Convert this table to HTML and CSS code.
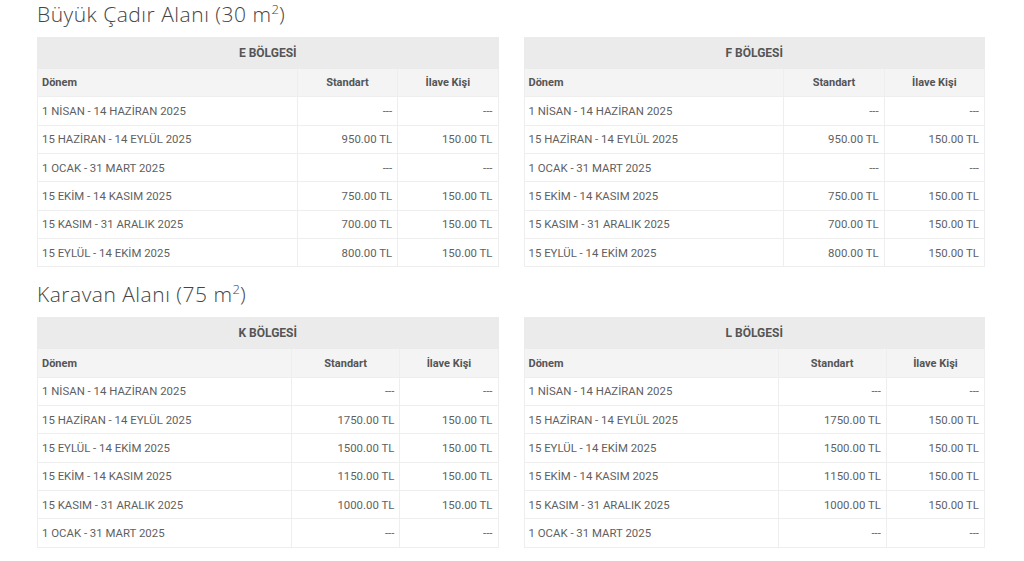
FILE: index.html
```html
<!DOCTYPE html>
<html lang="tr">
<head>
<meta charset="utf-8">
<link rel="stylesheet" href="styles.css">
</head>
<body>
<div class="page">
  <h2 class="title">Büyük Çadır Alanı (30 m<sup>2</sup>)</h2>
  <div class="pair">
    <table class="prices">
      <thead>
        <tr class="zone"><th colspan="3">E BÖLGESİ</th></tr>
        <tr class="cols"><th class="left">Dönem</th><th>Standart</th><th>İlave Kişi</th></tr>
      </thead>
      <tbody>
        <tr><td>1 NİSAN - 14 HAZİRAN 2025</td><td class="num">---</td><td class="num">---</td></tr>
        <tr><td>15 HAZİRAN - 14 EYLÜL 2025</td><td class="num">950.00 TL</td><td class="num">150.00 TL</td></tr>
        <tr><td>1 OCAK - 31 MART 2025</td><td class="num">---</td><td class="num">---</td></tr>
        <tr><td>15 EKİM - 14 KASIM 2025</td><td class="num">750.00 TL</td><td class="num">150.00 TL</td></tr>
        <tr><td>15 KASIM - 31 ARALIK 2025</td><td class="num">700.00 TL</td><td class="num">150.00 TL</td></tr>
        <tr><td>15 EYLÜL - 14 EKİM 2025</td><td class="num">800.00 TL</td><td class="num">150.00 TL</td></tr>
      </tbody>
    </table>
    <table class="prices">
      <thead>
        <tr class="zone"><th colspan="3">F BÖLGESİ</th></tr>
        <tr class="cols"><th class="left">Dönem</th><th>Standart</th><th>İlave Kişi</th></tr>
      </thead>
      <tbody>
        <tr><td>1 NİSAN - 14 HAZİRAN 2025</td><td class="num">---</td><td class="num">---</td></tr>
        <tr><td>15 HAZİRAN - 14 EYLÜL 2025</td><td class="num">950.00 TL</td><td class="num">150.00 TL</td></tr>
        <tr><td>1 OCAK - 31 MART 2025</td><td class="num">---</td><td class="num">---</td></tr>
        <tr><td>15 EKİM - 14 KASIM 2025</td><td class="num">750.00 TL</td><td class="num">150.00 TL</td></tr>
        <tr><td>15 KASIM - 31 ARALIK 2025</td><td class="num">700.00 TL</td><td class="num">150.00 TL</td></tr>
        <tr><td>15 EYLÜL - 14 EKİM 2025</td><td class="num">800.00 TL</td><td class="num">150.00 TL</td></tr>
      </tbody>
    </table>
  </div>
  <h2 class="title">Karavan Alanı (75 m<sup>2</sup>)</h2>
  <div class="pair">
    <table class="prices">
      <thead>
        <tr class="zone"><th colspan="3">K BÖLGESİ</th></tr>
        <tr class="cols"><th class="left">Dönem</th><th>Standart</th><th>İlave Kişi</th></tr>
      </thead>
      <tbody>
        <tr><td>1 NİSAN - 14 HAZİRAN 2025</td><td class="num">---</td><td class="num">---</td></tr>
        <tr><td>15 HAZİRAN - 14 EYLÜL 2025</td><td class="num">1750.00 TL</td><td class="num">150.00 TL</td></tr>
        <tr><td>15 EYLÜL - 14 EKİM 2025</td><td class="num">1500.00 TL</td><td class="num">150.00 TL</td></tr>
        <tr><td>15 EKİM - 14 KASIM 2025</td><td class="num">1150.00 TL</td><td class="num">150.00 TL</td></tr>
        <tr><td>15 KASIM - 31 ARALIK 2025</td><td class="num">1000.00 TL</td><td class="num">150.00 TL</td></tr>
        <tr><td>1 OCAK - 31 MART 2025</td><td class="num">---</td><td class="num">---</td></tr>
      </tbody>
    </table>
    <table class="prices">
      <thead>
        <tr class="zone"><th colspan="3">L BÖLGESİ</th></tr>
        <tr class="cols"><th class="left">Dönem</th><th>Standart</th><th>İlave Kişi</th></tr>
      </thead>
      <tbody>
        <tr><td>1 NİSAN - 14 HAZİRAN 2025</td><td class="num">---</td><td class="num">---</td></tr>
        <tr><td>15 HAZİRAN - 14 EYLÜL 2025</td><td class="num">1750.00 TL</td><td class="num">150.00 TL</td></tr>
        <tr><td>15 EYLÜL - 14 EKİM 2025</td><td class="num">1500.00 TL</td><td class="num">150.00 TL</td></tr>
        <tr><td>15 EKİM - 14 KASIM 2025</td><td class="num">1150.00 TL</td><td class="num">150.00 TL</td></tr>
        <tr><td>15 KASIM - 31 ARALIK 2025</td><td class="num">1000.00 TL</td><td class="num">150.00 TL</td></tr>
        <tr><td>1 OCAK - 31 MART 2025</td><td class="num">---</td><td class="num">---</td></tr>
      </tbody>
    </table>
  </div>
</div>
</body>
</html>
```
FILE: styles.css
```css
html, body {
  margin: 0;
  padding: 0;
  background: #ffffff;
}
body {
  font-family: Roboto, "Liberation Sans", sans-serif;
  color: #5f5f5f;
}
.page {
  padding: 0 39px 0 37px;
}
.title {
  margin: 0;
  font-family: "Open Sans", "DejaVu Sans", sans-serif;
  font-weight: 300;
  font-size: 21px;
  letter-spacing: 0.5px;
  line-height: 28px;
  color: #444444;
  padding: 0 0 9px 0;
}
.title sup {
  font-size: 13px;
  line-height: 0;
  letter-spacing: 0;
}
.pair {
  display: grid;
  grid-template-columns: 1fr 1fr;
  column-gap: 25px;
  margin-bottom: 13px;
}
.prices {
  width: 100%;
  border-collapse: collapse;
  font-size: 11.4px;
}
.prices th, .prices td {
  border: 1px solid #eeeeee;
  padding: 0 5px;
  height: 27.35px;
  text-align: right;
  white-space: nowrap;
}
.prices td:first-child {
  text-align: left;
  padding-left: 4px;
}
.prices .zone th {
  background: #ebebeb;
  text-align: center;
  height: 30px;
  font-weight: 700;
  font-size: 12px;
  color: #555555;
  border-color: #ebebeb;
}
.prices .cols th {
  background: #f4f4f4;
  font-weight: 700;
  font-size: 11px;
  color: #555555;
  text-align: center;
}
.prices .cols th.left {
  text-align: left;
  padding-left: 4px;
}
```
